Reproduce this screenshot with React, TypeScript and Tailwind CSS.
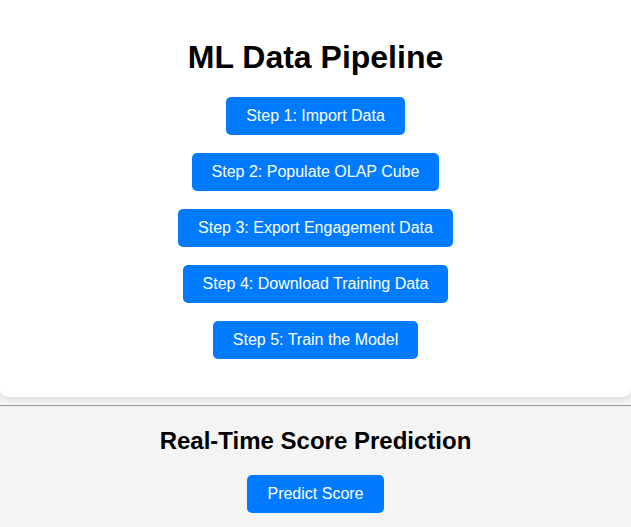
const steps = [
  "Step 1: Import Data",
  "Step 2: Populate OLAP Cube",
  "Step 3: Export Engagement Data",
  "Step 4: Download Training Data",
  "Step 5: Train the Model",
];

function BlueButton({ label }: { label: string }) {
  return (
    <button className="h-[38px] rounded-[5px] bg-[#007bff] px-5 text-[16px] leading-[18px] text-white">
      {label}
    </button>
  );
}

export default function App() {
  return (
    <div className="min-h-[527px] bg-[#f4f4f4] font-['Liberation_Sans',Arial,sans-serif] text-black">
      <div className="flex flex-col items-center rounded-b-lg bg-white pt-[39px] pb-[38px] shadow-[0_2px_6px_rgba(0,0,0,0.12)]">
        <h1 className="text-[32px] font-bold leading-[37px]">ML Data Pipeline</h1>
        <div className="mt-[21px] flex flex-col items-center gap-[18px]">
          {steps.map((s) => (
            <BlueButton key={s} label={s} />
          ))}
        </div>
      </div>
      <div className="mt-[8px] h-[2px] border-t border-b border-t-[#9a9a9a] border-b-[#eeeeee]" />
      <div className="flex flex-col items-center pt-[20px]">
        <h2 className="text-[24px] font-bold leading-[28px]">Real-Time Score Prediction</h2>
        <div className="mt-[20px]">
          <BlueButton label="Predict Score" />
        </div>
      </div>
    </div>
  );
}
